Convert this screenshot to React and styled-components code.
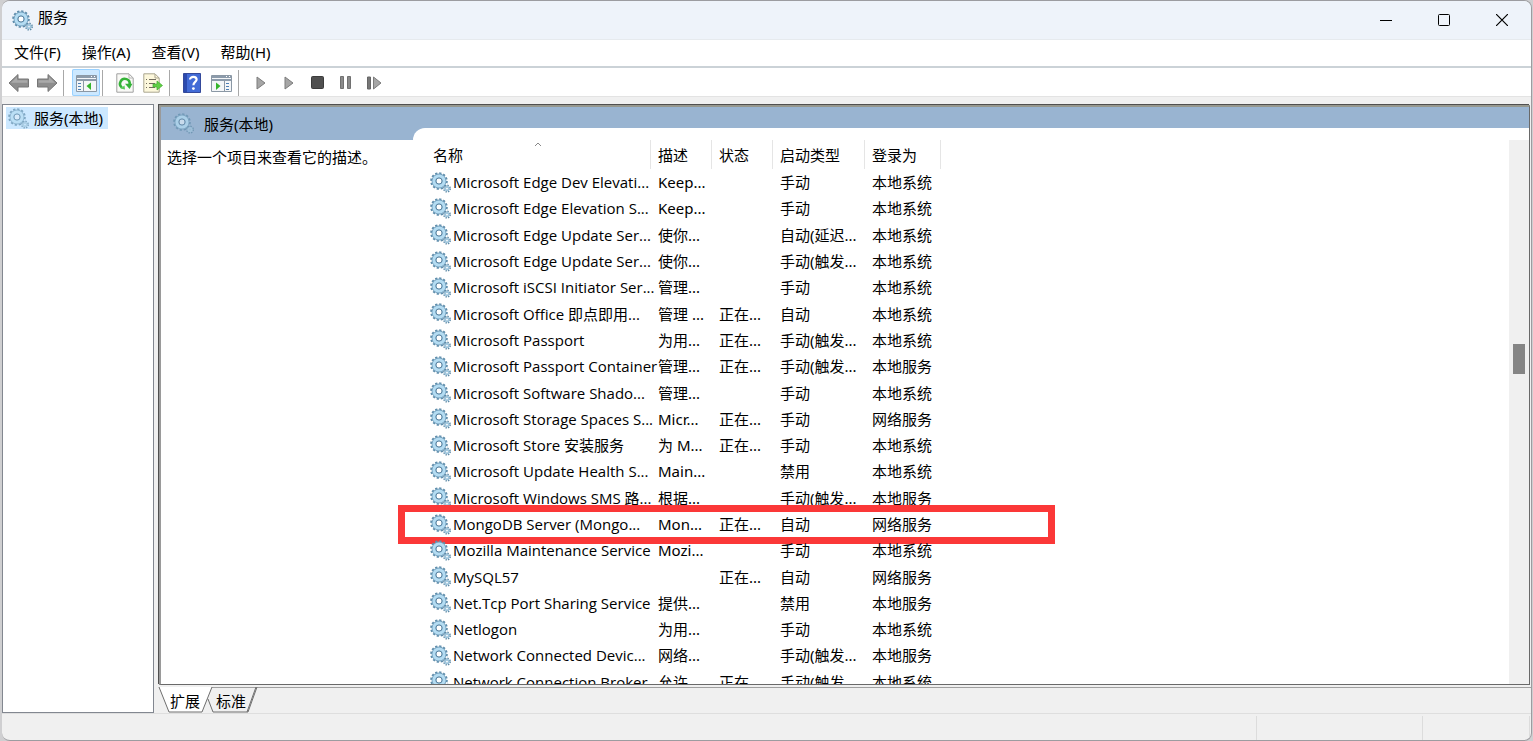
import { useState } from 'react';
import styled, { createGlobalStyle } from 'styled-components';

const GlobalStyle = createGlobalStyle`
    * {
        box-sizing: border-box;
    }

    body {
        margin: 0;
        background-color: #cfcfd1;
        color: #000;
        font: 15px/20px "Noto Sans", "Noto Sans CJK SC", sans-serif;
    }

    button {
        padding: 0;
        border: none;
        background: none;
        color: inherit;
        font: inherit;
    }
`

const Window = styled.div`
    display: flex;
    flex-direction: column;
    height: 100vh;
    margin: 0 1px 0 2px;
    border: 1px solid #9c9ca0;
    border-left: none;
    border-radius: 8px;
    overflow: hidden;
    background-color: #f0f0f0;
`

const TitleBar = styled.header`
    display: flex;
    align-items: center;
    height: 39px;
    flex-shrink: 0;
    padding-left: 10px;
    border-bottom: 1px solid #e6eaee;
    background-color: #eef3fa;
`

const Title = styled.h1`
    flex: 1;
    margin: 0 0 6px 5px;
    font-size: 15px;
    font-weight: 400;
`

const WindowButton = styled.button`
    display: grid;
    place-items: center;
    width: 58px;
    height: 38px;
`

const MenuBar = styled.nav`
    display: flex;
    gap: 21px;
    height: 28px;
    flex-shrink: 0;
    padding: 0 12px 2px;
    border-bottom: 2px solid #cbd2d7;
    background-color: #fff;
`

const Toolbar = styled.div`
    display: flex;
    align-items: center;
    height: 29px;
    flex-shrink: 0;
    padding: 1px 0 0 3px;
    border-bottom: 1px solid #e3e3e3;
    background-color: #fff;
`

const ToolButton = styled.button`
    display: grid;
    place-items: center;
    width: ${props => props.$wide ? '30px' : '28px'};
    height: 27px;
    border-radius: 2px;
    ${props => props.$active && `
        background-color: #cce8ff;
        box-shadow: inset 0 0 0 1px #99d1ff;
    `}
`

const Divider = styled.span`
    width: 1px;
    height: 26px;
    margin: 0 8px 0 2px;
    background-color: #a8a8a8;
`

const Body = styled.main`
    display: flex;
    flex: 1;
    gap: 5px;
    min-height: 0;
    padding-top: 7px;
`

const TreePane = styled.aside`
    width: 152px;
    flex-shrink: 0;
    padding: 2px 3px;
    border: 1px solid #828790;
    background-color: #fff;
`

const TreeItem = styled.button`
    display: flex;
    align-items: center;
    gap: 5px;
    height: 22px;
    padding: 0 5px 0 2px;
    background-color: #cce8ff;
`

const Detail = styled.section`
    display: flex;
    flex-direction: column;
    flex: 1;
    min-width: 0;
`

const Pane = styled.div`
    display: flex;
    flex: 1;
    min-height: 0;
    margin: 1px 1px 0 0;
    overflow: hidden;
    border: 1px solid #696969;
    border-top: 2px solid #96988f;
    border-left: 2px solid #9a9a9a;
    background-color: #99b4d1;
    box-shadow: -1px -1px 0 #505050;
`

const Summary = styled.div`
    display: flex;
    flex-direction: column;
    width: 252px;
    flex-shrink: 0;
`

const SummaryTitle = styled.h2`
    display: flex;
    align-items: center;
    gap: 10px;
    height: 33px;
    margin: 0;
    padding-left: 12px;
    font-size: 15px;
    font-weight: 400;
`

const SummaryText = styled.p`
    flex: 1;
    margin: 0;
    padding: 7px 6px;
    background-color: #fff;
`

const ListPane = styled.div`
    display: flex;
    justify-content: space-between;
    flex: 1;
    margin-top: 21px;
    padding: 12px 0 0 13px;
    border-top-left-radius: 12px;
    background-color: #fff;
`

const ServiceTable = styled.table`
    width: 515px;
    height: 555px;
    flex-shrink: 0;
    table-layout: fixed;
    border-collapse: separate;
    border-spacing: 0;
    text-align: left;
    white-space: nowrap;
`

const HeadCell = styled.th`
    position: relative;
    width: ${props => props.$width}px;
    height: 29px;
    padding: 1px 0 0 7px;
    border-right: 1px solid #e5e5e5;
    font-weight: 400;
`

const SortMark = styled.svg`
    position: absolute;
    top: 1px;
    left: 108px;
`

const Row = styled.tr`
    position: relative;
`

const Cell = styled.td`
    padding: 0 0 0 7px;
`

const NameCell = styled(Cell)`
    padding-left: 4px;
    font-family: "Open Sans", "Noto Sans CJK SC", sans-serif;

    & > div {
        display: flex;
        align-items: center;
        gap: 2px;
    }
`

const Highlight = styled.span`
    position: absolute;
    top: -6px;
    left: -28px;
    width: 657px;
    height: 39px;
    border: 7px solid #fb3838;
    pointer-events: none;
`

const ScrollTrack = styled.div`
    width: 20px;
    padding: 204px 4px 0;
    background-color: #f0f0f0;
`

const ScrollThumb = styled.div`
    height: 30px;
    background-color: #858585;
`

const Tabs = styled.div`
    display: flex;
    height: 26px;
    flex-shrink: 0;
    margin-top: 2px;
    border-top: 1px solid #a0a0a0;
`

const Tab = styled.button`
    position: relative;
    width: ${props => props.$width}px;
    height: 25px;

    svg {
        position: absolute;
        top: -1px;
        left: 0;
        overflow: visible;
    }

    span {
        position: relative;
    }
`

const StatusBar = styled.footer`
    display: flex;
    justify-content: flex-end;
    height: 27px;
    flex-shrink: 0;
    padding: 2px 1px 0;
    border-top: 1px solid #dedede;
`

const StatusCell = styled.div`
    width: ${props => props.$width}px;
    border-left: 1px solid #dcdcdc;
`

const Gear = styled.svg`
    flex-shrink: 0;
    opacity: ${props => props.$faded ? 0.7 : 1};
`

const GearIcon = ({ faded }) => (
    <Gear $faded={faded} width="21" height="21" viewBox="0 0 21 21" fill="none" aria-hidden="true">
        <circle cx="9" cy="9" r="7.7" stroke="#5f8dab" strokeWidth="2.2" strokeDasharray="2.2 1.83" />
        <circle cx="9" cy="9" r="5.2" stroke="#739fbd" strokeWidth="4.4" />
        <circle cx="9" cy="9" r="5.1" stroke="#b4dcf2" strokeWidth="3" />
        <circle cx="9" cy="9" r="3" fill={faded ? '#dcecf8' : '#fff'} stroke="#5c86a4" strokeWidth="1" />
        <circle cx="17" cy="16.6" r="3" stroke="#5f8ba8" strokeWidth="2" strokeDasharray="1.3 1.05" />
        <circle cx="17" cy="16.6" r="1.8" stroke="#9fc5dc" strokeWidth="1.8" />
    </Gear>
)

const ArrowIcon = ({ right }) => (
    <svg width="22" height="20" viewBox="0 0 22 20" aria-hidden="true">
        <g transform={right ? 'matrix(-1 0 0 1 22 0)' : undefined}>
            <path d="M1 10 10 1.5V6H20.5V14H10V18.5Z" fill="#8e8e8e" stroke="#777" />
            <path d="M3 9.7 9 4V7.3H19.4V9.7Z" fill="#aaa" />
        </g>
    </svg>
)

const PanelIcon = ({ right }) => (
    <svg width="21" height="18" viewBox="0 0 21 18" aria-hidden="true">
        <path d="M.5 1.5H20.5V17.5H.5Z" fill="#f4f6f8" stroke="#8b98a5" />
        <path d="M1 2H20V4H1ZM1 5H20V7H1Z" fill="#8c9bab" />
        <path d="M15 2.5H16M18 2.5H19" stroke="#fff" />
        {right ? (
            <>
                <path d="M13.5 7V17" stroke="#8b98a5" />
                <path d="M15 9.5H19M15 12.5H19M15 15.5H19" stroke="#4d7fb5" strokeDasharray="3 1" />
                <path d="M5 8.5 9.5 12 5 16Z" fill="#35b52c" />
            </>
        ) : (
            <>
                <path d="M7.5 7V17" stroke="#8b98a5" />
                <path d="M2 9.5H6M2 12.5H6M2 15.5H6" stroke="#4d7fb5" strokeDasharray="3 1" />
                <path d="M15 8.5 10.5 12 15 16Z" fill="#35b52c" />
            </>
        )}
    </svg>
)

const RefreshIcon = () => (
    <svg width="18" height="20" viewBox="0 0 18 20" fill="none" aria-hidden="true">
        <path d="M.8.8H13L17.2 5V19.2H.8Z" fill="#f9f9f6" stroke="#a0a0a0" />
        <path d="M13 1V5H17" stroke="#b5b5b5" />
        <path d="M5.9 14.4A4.8 4.8 0 1 1 13.6 11.5" stroke="#35b338" strokeWidth="2.6" />
        <path d="M9 10.8H16.4L13.6 16Z" fill="#35b338" />
        <path d="M4.5 15.5 9 16.5 8.5 12.5Z" fill="#57c955" />
    </svg>
)

const ExportIcon = () => (
    <svg width="20" height="20" viewBox="0 0 20 20" aria-hidden="true">
        <path d="M.8.8H12L16.2 5V19.2H.8Z" fill="#fdf8dc" stroke="#aaa591" />
        <path d="M12 1V5H16" fill="none" stroke="#aaa591" />
        <path d="M3 6.5H4M3 10.5H4M3 14.5H4M6 6.5H13M6 10.5H12M6 14.5H12" stroke="#716b5d" />
        <path d="M10 11H14V8L19.5 12.5 14 17V14H10Z" fill="#62cf45" stroke="#43ad34" strokeWidth=".7" />
    </svg>
)

const HelpIcon = () => (
    <svg width="18" height="20" viewBox="0 0 18 20" fill="none" aria-hidden="true">
        <path d="M.5.5H17.5V19.5H.5Z" fill="#426bd6" stroke="#34499b" />
        <path d="M1 1H4V19H1Z" fill="#2c4aae" />
        <path d="M7 6.5C7 3 13.6 3 13.6 6.6 13.6 9 10.4 9 10.4 12.2" stroke="#fff" strokeWidth="2.2" />
        <circle cx="10.4" cy="15.6" r="1.4" fill="#fff" />
    </svg>
)

const PlayIcon = () => (
    <svg width="10" height="14" viewBox="0 0 10 14" aria-hidden="true">
        <path d="M1 1 9 7 1 13Z" fill="#a6a6a6" stroke="#7c7c7c" />
    </svg>
)

const StopIcon = () => (
    <svg width="13" height="13" viewBox="0 0 13 13" aria-hidden="true">
        <rect x=".5" y=".5" width="12" height="12" rx="1" fill="#505050" stroke="#3c3c3c" />
    </svg>
)

const PauseIcon = () => (
    <svg width="11" height="13" viewBox="0 0 11 13" aria-hidden="true">
        <path d="M.5.5H3.5V12.5H.5ZM7.5.5H10.5V12.5H7.5Z" fill="#8b8b8b" stroke="#717171" />
    </svg>
)

const RestartIcon = () => (
    <svg width="15" height="14" viewBox="0 0 15 14" aria-hidden="true">
        <path d="M.5 1H3.5V13H.5Z" fill="#777" stroke="#666" />
        <path d="M6.5 1 14 7 6.5 13Z" fill="#a6a6a6" stroke="#7c7c7c" />
    </svg>
)

const menus = ['文件(F)', '操作(A)', '查看(V)', '帮助(H)'];

const columns = [
    { label: '名称', width: 225 },
    { label: '描述', width: 61 },
    { label: '状态', width: 61 },
    { label: '启动类型', width: 92 },
    { label: '登录为', width: 76 },
];

const services = [
    ['Microsoft Edge Dev Elevati...', 'Keep...', '', '手动', '本地系统'],
    ['Microsoft Edge Elevation S...', 'Keep...', '', '手动', '本地系统'],
    ['Microsoft Edge Update Ser...', '使你...', '', '自动(延迟...', '本地系统'],
    ['Microsoft Edge Update Ser...', '使你...', '', '手动(触发...', '本地系统'],
    ['Microsoft iSCSI Initiator Ser...', '管理...', '', '手动', '本地系统'],
    ['Microsoft Office 即点即用...', '管理 ...', '正在...', '自动', '本地系统'],
    ['Microsoft Passport', '为用...', '正在...', '手动(触发...', '本地系统'],
    ['Microsoft Passport Container', '管理...', '正在...', '手动(触发...', '本地服务'],
    ['Microsoft Software Shado...', '管理...', '', '手动', '本地系统'],
    ['Microsoft Storage Spaces S...', 'Micr...', '正在...', '手动', '网络服务'],
    ['Microsoft Store 安装服务', '为 M...', '正在...', '手动', '本地系统'],
    ['Microsoft Update Health S...', 'Main...', '', '禁用', '本地系统'],
    ['Microsoft Windows SMS 路...', '根据...', '', '手动(触发...', '本地服务'],
    ['MongoDB Server (Mongo...', 'Mon...', '正在...', '自动', '网络服务'],
    ['Mozilla Maintenance Service', 'Mozi...', '', '手动', '本地系统'],
    ['MySQL57', '', '正在...', '自动', '网络服务'],
    ['Net.Tcp Port Sharing Service', '提供...', '', '禁用', '本地服务'],
    ['Netlogon', '为用...', '', '手动', '本地系统'],
    ['Network Connected Devic...', '网络...', '', '手动(触发...', '本地服务'],
    ['Network Connection Broker', '允许...', '正在...', '手动(触发...', '本地系统'],
];

const ServiceRow = ({ service, highlighted }) => {
    const [name, ...rest] = service;

    return (
        <Row>
            <NameCell>
                <div>
                    <GearIcon />
                    {name}
                </div>
                {highlighted && <Highlight />}
            </NameCell>
            {rest.map((text, i) => <Cell key={i}>{text}</Cell>)}
        </Row>
    )
}

const App = () => {
    const [tab, setTab] = useState('extended');

    return (
        <>
            <GlobalStyle />
            <Window>
                <TitleBar>
                    <GearIcon />
                    <Title>服务</Title>
                    <WindowButton aria-label="最小化">
                        <svg width="12" height="12"><path d="M0 6.5H12" stroke="#000" /></svg>
                    </WindowButton>
                    <WindowButton aria-label="最大化">
                        <svg width="12" height="12"><rect x=".5" y=".5" width="11" height="11" rx="1" fill="none" stroke="#000" /></svg>
                    </WindowButton>
                    <WindowButton aria-label="关闭">
                        <svg width="12" height="12"><path d="M0 0 12 12M12 0 0 12" stroke="#000" strokeWidth="1.2" /></svg>
                    </WindowButton>
                </TitleBar>
                <MenuBar>
                    {menus.map(menu => <button key={menu}>{menu}</button>)}
                </MenuBar>
                <Toolbar>
                    <ToolButton aria-label="后退"><ArrowIcon /></ToolButton>
                    <ToolButton aria-label="前进"><ArrowIcon right /></ToolButton>
                    <Divider />
                    <ToolButton $active aria-label="显示控制台树"><PanelIcon /></ToolButton>
                    <Divider />
                    <ToolButton aria-label="刷新"><RefreshIcon /></ToolButton>
                    <ToolButton aria-label="导出列表"><ExportIcon /></ToolButton>
                    <Divider />
                    <ToolButton aria-label="帮助"><HelpIcon /></ToolButton>
                    <ToolButton $wide aria-label="显示操作窗格"><PanelIcon right /></ToolButton>
                    <Divider />
                    <ToolButton aria-label="启动"><PlayIcon /></ToolButton>
                    <ToolButton aria-label="继续"><PlayIcon /></ToolButton>
                    <ToolButton aria-label="停止"><StopIcon /></ToolButton>
                    <ToolButton aria-label="暂停"><PauseIcon /></ToolButton>
                    <ToolButton $wide aria-label="重新启动"><RestartIcon /></ToolButton>
                </Toolbar>
                <Body>
                    <TreePane>
                        <TreeItem>
                            <GearIcon faded />
                            服务(本地)
                        </TreeItem>
                    </TreePane>
                    <Detail>
                        <Pane>
                            <Summary>
                                <SummaryTitle>
                                    <GearIcon faded />
                                    服务(本地)
                                </SummaryTitle>
                                <SummaryText>选择一个项目来查看它的描述。</SummaryText>
                            </Summary>
                            <ListPane>
                                <ServiceTable>
                                    <thead>
                                        <tr>
                                            {columns.map((column, i) => (
                                                <HeadCell key={column.label} $width={column.width}>
                                                    {column.label}
                                                    {i === 0 && (
                                                        <SortMark width="8" height="6">
                                                            <path d="M1 5 4 2 7 5" fill="none" stroke="#888" />
                                                        </SortMark>
                                                    )}
                                                </HeadCell>
                                            ))}
                                        </tr>
                                    </thead>
                                    <tbody>
                                        {services.map((service, i) => (
                                            <ServiceRow
                                                key={i}
                                                service={service}
                                                highlighted={service[0].startsWith('MongoDB')}
                                            />
                                        ))}
                                    </tbody>
                                </ServiceTable>
                                <ScrollTrack>
                                    <ScrollThumb />
                                </ScrollTrack>
                            </ListPane>
                        </Pane>
                        <Tabs>
                            <Tab $width={52} aria-pressed={tab === 'extended'} onClick={() => setTab('extended')}>
                                <svg width="54" height="26">
                                    <path d="M0 0 10 25H43L53 0Z" fill="#fff" />
                                    <path d="M0 0 10 25H43L53 0" fill="none" stroke="#6e6e6e" />
                                </svg>
                                <span>扩展</span>
                            </Tab>
                            <Tab $width={40} aria-pressed={tab === 'standard'} onClick={() => setTab('standard')}>
                                <svg width="48" height="26">
                                    <path d="M-3 12 2 25H37L46 0" fill="none" stroke="#6e6e6e" />
                                    <path d="M36 25 45 0" stroke="#6e6e6e" />
                                </svg>
                                <span>标准</span>
                            </Tab>
                        </Tabs>
                    </Detail>
                </Body>
                <StatusBar>
                    <StatusCell $width={166} />
                    <StatusCell $width={107} />
                    <StatusCell $width={1} />
                </StatusBar>
            </Window>
        </>
    )
}

export default App;
